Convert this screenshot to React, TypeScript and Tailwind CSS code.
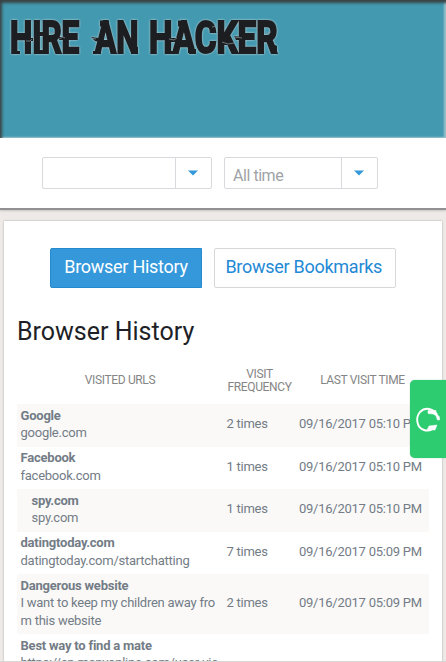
import React from "react";

const rows = [
  { title: "Google", lines: ["google.com"], times: "2 times", date: "09/16/2017 05:10 PM", height: "h-[42.5px]" },
  { title: "Facebook", lines: ["facebook.com"], times: "1 times", date: "09/16/2017 05:10 PM", height: "h-[42.5px]" },
  { title: "spy.com", lines: ["spy.com"], times: "1 times", date: "09/16/2017 05:10 PM", height: "h-[42.5px]", indent: true },
  { title: "datingtoday.com", lines: ["datingtoday.com/startchatting"], times: "7 times", date: "09/16/2017 05:09 PM", height: "h-[42.5px]" },
  { title: "Dangerous website", lines: ["I want to keep my children away fro", "m this website"], times: "2 times", date: "09/16/2017 05:09 PM", height: "h-[60px]" },
  { title: "Best way to find a mate", lines: ["https://en.manyonline.com/user-vie"], times: "", date: "", height: "h-[60px]" },
];

function Logo() {
  return (
    <svg width="290" height="70" viewBox="0 0 290 70" aria-label="Hire an Hacker">
      <g className="drop-shadow-[0_0_0.8px_#d0d8da]">
        <g fontFamily="Roboto, sans-serif" fontWeight="700" fontSize="44" fill="#1c1e21" stroke="#1c1e21" strokeWidth="2.2" strokeLinejoin="miter">
          <text transform="translate(10 52.7) scale(.715 1)">HIRE</text>
          <text transform="translate(95 52.7) scale(.715 1)">AN</text>
          <text transform="translate(149 52.7) scale(.755 1)">HACKER</text>
        </g>
        <g fill="#1c1e21">
          <path d="M29 38h4v3h-4zM38 32h6v4h-6zM59 37h6v3h-6zM91 37l8 1v4l-4-1zM132 44l6 3v7h-7zM169 38h7v4h-7zM188 49h8v4h-8zM222 41l7 1v3h-8zM234 36l9 1v3h-7zM271 43l6 3v7h-5z" />
          <path d="M12 51h8v3h-8zM38 50h8v4h-8zM93 51h8v3h-8zM170 51h8v3h-8zM242 51h8v3h-8z" />
          <path d="M100 20.500h9v6h-9zM178 20.500h9v6h-9z" />
        </g>
      </g>
      <g fill="none" stroke="#8b989c" strokeWidth=".7">
        <path d="M26 41h4l2-2M49 33l4-1 2 2M59 39l4-2 2 1M91 38l5 1M169 39l5 1 3-2M212 27l5-1M222 42l6 2 6-1M234 37l8 1M266 33l5-1" />
      </g>
    </svg>
  );
}

function Caret() {
  return (
    <svg width="10" height="6" viewBox="0 0 10 6" className="mr-[2px] mb-[1px]">
      <path d="M0 .5h10L5 5.5z" fill="#3498db" />
    </svg>
  );
}

export default function App() {
  return (
    <main className="relative flex h-[662px] w-[446px] flex-col overflow-hidden bg-[#edeae7] font-['Roboto',sans-serif] text-[#737c86]">
      <header className="h-[138px] shrink-0 bg-[#4299b0] shadow-[inset_2px_3px_3px_#394345,inset_-2px_-1px_2px_#9bc5cf]">
        <Logo />
      </header>
      <section className="flex h-[72px] shrink-0 gap-3 border-b-2 border-[#929090] bg-white pt-[19px] pl-[42px] shadow-[0_1px_2px_#c8c5c3]">
        <div className="flex h-8 w-[170px] rounded-[2px] border border-[#d8d9dc]">
          <div className="w-[133px] border-r border-[#d8d9dc]" />
          <div className="flex flex-1 items-center justify-center"><Caret /></div>
        </div>
        <div className="flex h-8 w-[154px] rounded-[2px] border border-[#d8d9dc]">
          <div className="w-[117px] border-r border-[#d8d9dc] pt-2 pl-2 text-[16px] leading-5 tracking-[-0.45px] text-[#9fa3a6]">All time</div>
          <div className="flex flex-1 items-center justify-center"><Caret /></div>
        </div>
      </section>
      <section className="mx-1 mt-[11px] h-[460px] w-[438px] shrink-0 bg-white px-[13px] pt-[27px] shadow-[0_0_2px_#aaa6a3]">
        <div className="flex gap-3 pl-[33px]">
          <button className="h-10 w-[152px] rounded-l-[2px] border border-[#258bd1] bg-[#3498db] pb-[2px] text-[18px] leading-5 tracking-[-0.27px] whitespace-nowrap text-white">Browser History</button>
          <button className="h-10 w-[181.500px] rounded-[2px] border border-[#d8d8d8] pr-[2px] pb-[2px] text-[18px] leading-5 tracking-[-0.27px] whitespace-nowrap text-[#2389d5]">Browser Bookmarks</button>
        </div>
        <h1 className="mt-[29px] h-[29px] text-[25px] leading-[30px] text-[#1e1f27]">Browser History</h1>
        <div className="mt-[11px] flex h-[47px] items-center text-center text-[12px] leading-[13px] tracking-[-0.35px] text-[#858585]">
          <div className="w-[206px]">VISITED URLS</div>
          <div className="w-[73px]">VISIT<br />FREQUENCY</div>
          <div className="w-[133px]">LAST VISIT TIME</div>
        </div>
        {rows.map((row) => (
          <div key={row.title} className={`flex ${row.height} w-[412px] items-center text-[13px] leading-[17.5px] tracking-[-0.25px] whitespace-nowrap odd:bg-white even:bg-[#faf9f8]`}>
            <div className={`w-[209.5px] shrink-0 self-start pt-[2.5px] ${row.indent ? "pl-[14.5px]" : "pl-[3.5px]"}`}>
              <div className="font-bold tracking-[-0.22px]">{row.title}</div>
              {row.lines.map((line) => <div key={line}>{line}</div>)}
            </div>
            <div className="w-[72.5px] shrink-0 pb-[3px]">{row.times}</div>
            <div className="pb-[3px]">{row.date}</div>
          </div>
        ))}
      </section>
      <div className="absolute top-[380px] right-0 flex h-[78px] w-9 items-center justify-center rounded-l-[5px] bg-[#2ecc71] shadow-[0_0_1px_#40ad70]">
        <svg width="28" height="28" viewBox="0 0 28 28" fill="none" stroke="white">
          <path d="M23 9.500C19 3 11 2 6 7c-5 6-3 16 4 18 3 1 6 .5 8-.5" strokeWidth="1.9" />
          <path d="M14 5.500h8v5l-3-1.500-5-.5zM13 25l2-4 8-1-2 5z" fill="white" strokeWidth=".5" />
          <path d="M22 8l3.500 4v3h-2l-1.500-4z" fill="white" strokeWidth=".5" />
        </svg>
      </div>
      <div className="absolute bottom-0 left-0 h-px w-full bg-[#d9d7d5]" />
    </main>
  );
}
